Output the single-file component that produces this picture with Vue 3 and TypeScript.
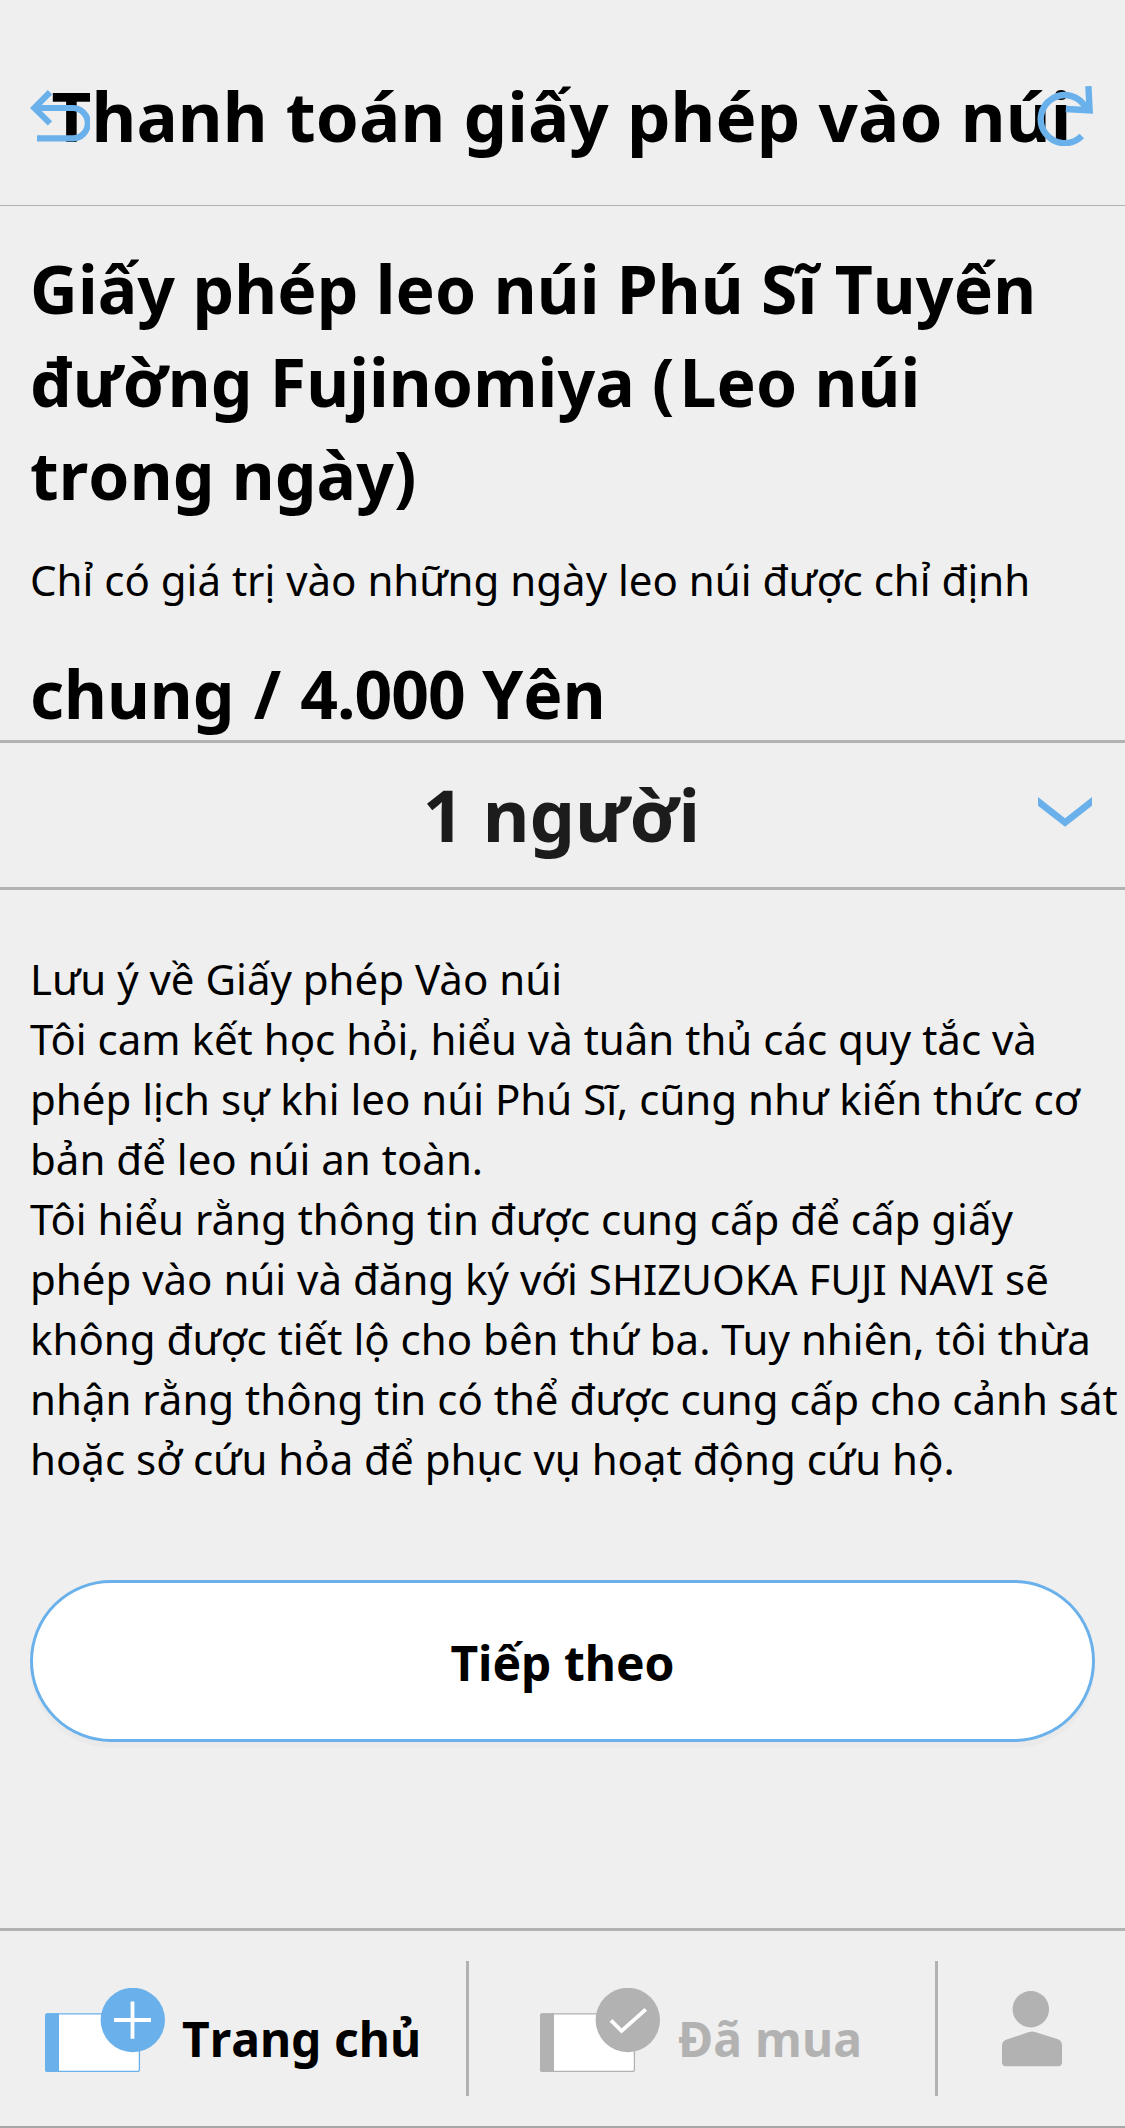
<script setup lang="ts">
import { ref } from 'vue'

const quantity = ref('1 người')

const noteLines: string[] = [
  'Lưu ý về Giấy phép Vào núi',
  'Tôi cam kết học hỏi, hiểu và tuân thủ các quy tắc và',
  'phép lịch sự khi leo núi Phú Sĩ, cũng như kiến thức cơ',
  'bản để leo núi an toàn.',
  'Tôi hiểu rằng thông tin được cung cấp để cấp giấy',
  'phép vào núi và đăng ký với SHIZUOKA FUJI NAVI sẽ',
  'không được tiết lộ cho bên thứ ba. Tuy nhiên, tôi thừa',
  'nhận rằng thông tin có thể được cung cấp cho cảnh sát',
  'hoặc sở cứu hỏa để phục vụ hoạt động cứu hộ.',
]
</script>

<template>
  <div class="page">
    <header class="header">
      <h1 class="title">Thanh toán giấy phép vào núi</h1>
      <svg class="back" viewBox="0 0 60 56" width="60" height="56" aria-hidden="true">
        <path d="M20 4.3 4.3 20 20 35.4M4.3 20H42.6a15.2 15.2 0 0 1 0 30.4H7" />
      </svg>
      <svg class="reload" viewBox="0 0 58 62" width="58" height="62" aria-hidden="true">
        <path d="M45.8 52A24 24 0 1 1 50.5 25" />
        <path d="M52.4 2.2 53.6 26.3 29.8 25" />
      </svg>
    </header>

    <main class="content">
      <section class="product">
        <h2 class="heading">
          <span class="line">Giấy phép leo núi Phú Sĩ Tuyến</span>
          <span class="line">đường Fujinomiya <span class="paren">(</span>Leo núi</span>
          <span class="line">trong ngày)</span>
        </h2>
        <p class="validity">Chỉ có giá trị vào những ngày leo núi được chỉ định</p>
        <p class="price"><span class="kind">chung / </span><span class="amount">4.000</span> Yên</p>
      </section>

      <div class="select">
        <span>{{ quantity }}</span>
        <svg class="chevron" viewBox="0 0 54 30" width="54" height="30" aria-hidden="true">
          <path d="M0 0 27 21.2 54 0V8.7L27 29.8 0 8.7Z" />
        </svg>
      </div>

      <p class="notes">
        <span v-for="line in noteLines" :key="line" class="line">{{ line }}</span>
      </p>

      <button class="next" type="button">Tiếp theo</button>
    </main>

    <nav class="tabs">
      <a class="tab home">
        <svg class="ticket" viewBox="0 0 122 86" width="122" height="86" aria-hidden="true">
          <rect x=".6" y="25.9" width="93.8" height="57.5" rx="2" fill="#fff" stroke="currentColor" stroke-width="1.3" />
          <path d="M2.5 25.3H14V84H2.5Q0 84 0 81.5V27.8Q0 25.3 2.5 25.3Z" fill="currentColor" />
          <circle cx="87.8" cy="32" r="32.2" fill="currentColor" />
          <path d="M69 32H106M87.5 13.5V50.7" fill="none" stroke="#fff" stroke-width="3.8" />
        </svg>
        <span>Trang chủ</span>
      </a>
      <a class="tab bought">
        <svg class="ticket" viewBox="0 0 122 86" width="122" height="86" aria-hidden="true">
          <rect x=".6" y="25.9" width="93.8" height="57.5" rx="2" fill="#fff" stroke="currentColor" stroke-width="1.3" />
          <path d="M2.5 25.3H14V84H2.5Q0 84 0 81.5V27.8Q0 25.3 2.5 25.3Z" fill="currentColor" />
          <circle cx="87.8" cy="32" r="32.2" fill="currentColor" />
          <path d="M71 32.3 81.6 43 105.8 21.3" fill="none" stroke="#fff" stroke-width="3.8" />
        </svg>
        <span>Đã mua</span>
      </a>
      <a class="tab account">
        <svg viewBox="0 0 60 76" width="60" height="76" aria-hidden="true">
          <circle cx="28.8" cy="18.2" r="18.2" fill="currentColor" />
          <path d="M4 48.7 27 41.1Q30 39.9 33 41.1L56 48.3Q60 50 60 54.5V71.5Q60 75.2 56.3 75.2H3.7Q0 75.2 0 71.5V54.5Q0 50.5 4 48.7Z" fill="currentColor" />
        </svg>
      </a>
    </nav>
  </div>
</template>

<style>
html,
body {
  margin: 0;
  background: #efefef;
}
</style>

<style scoped>
.page {
  box-sizing: border-box;
  display: flex;
  flex-direction: column;
  width: 1125px;
  height: 2128px;
  overflow: hidden;
  background: #efefef;
  color: #000;
  font-family: 'Noto Sans', sans-serif;
  font-size: 42px;
  line-height: 60px;
}

h1,
h2,
p {
  margin: 0;
}

.line {
  display: block;
  white-space: nowrap;
}

.header {
  position: relative;
  box-sizing: border-box;
  display: flex;
  justify-content: center;
  height: 206px;
  padding: 68px 2px 0 0;
  border-bottom: 1px solid #b2b2b2;
}

.title {
  font-size: 69px;
  font-weight: 700;
  letter-spacing: 0.1px;
  line-height: 94px;
  white-space: nowrap;
}

.back,
.reload {
  position: absolute;
  fill: none;
  stroke: #6ab1eb;
  stroke-width: 6.2;
}

.back {
  top: 88px;
  left: 30px;
}

.reload {
  top: 84px;
  right: 31px;
  stroke-width: 6.4;
}

.content {
  flex: 1;
  display: flex;
  flex-direction: column;
}

.product {
  padding: 36px 30px 0;
}

.heading,
.price {
  font-size: 66px;
  font-weight: 700;
  font-kerning: none;
  line-height: 93px;
}

.heading {
  letter-spacing: 0.1px;
}

.paren {
  letter-spacing: 5px;
}

.validity {
  margin: 29px 0 37px;
  white-space: nowrap;
}

.kind {
  word-spacing: 2px;
}

.amount {
  letter-spacing: -1px;
}

.select {
  position: relative;
  box-sizing: border-box;
  display: flex;
  align-items: center;
  justify-content: center;
  height: 150px;
  padding: 0 2px 2px 0;
  border-top: 3px solid #b2b2b2;
  border-bottom: 3px solid #b2b2b2;
  color: #1c1c1c;
  font-size: 72px;
  font-weight: 700;
}

.chevron {
  position: absolute;
  top: 54px;
  right: 33px;
  fill: #6ab1eb;
}

.notes {
  margin: 59px 0 91px;
  padding-left: 30px;
}

.next {
  box-sizing: border-box;
  height: 162px;
  margin: 0 30px;
  padding: 4px 0 0;
  border: 3px solid #6ab1eb;
  border-radius: 81px;
  background: #fff;
  box-shadow: 0 6px 0 #eaeaea;
  color: #000;
  font: 700 48px/66px 'Noto Sans', sans-serif;
}

.tabs {
  box-sizing: border-box;
  display: flex;
  height: 200px;
  padding-top: 30px;
  border-top: 3px solid #b2b2b2;
  border-bottom: 2px solid #a6a6a6;
}

.tab {
  box-sizing: border-box;
  display: flex;
  height: 135px;
  color: #b2b2b2;
  font-size: 48px;
  font-weight: 700;
  font-kerning: none;
  line-height: 66px;
  white-space: nowrap;
}

.tab svg {
  flex: none;
  margin-top: 27px;
}

.tab span {
  margin: 45px 0 0 16px;
}

.home {
  width: 469px;
  padding-left: 45px;
  border-right: 3px solid #b2b2b2;
  color: #6ab1eb;
}

.home span {
  margin-left: 15px;
  color: #000;
}

.bought {
  width: 469px;
  padding-left: 71px;
  border-right: 3px solid #b2b2b2;
  letter-spacing: 0.2px;
}

.account {
  padding-left: 64px;
}

.account svg {
  margin-top: 30px;
}
</style>
